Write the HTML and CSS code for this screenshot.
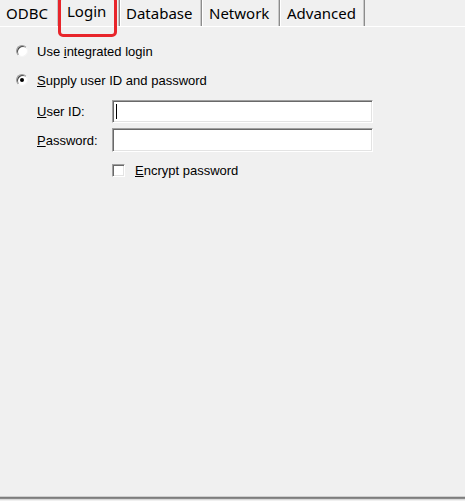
FILE: index.html
```html
<!DOCTYPE html>
<html>
<head>
<meta charset="utf-8">
<link rel="stylesheet" href="styles.css">
</head>
<body>
<div class="tabs">
  <div class="tab tab-odbc">ODBC</div>
  <div class="tab tab-login selected">Login</div>
  <div class="tab tab-db">Database</div>
  <div class="tab tab-net">Network</div>
  <div class="tab tab-adv">Advanced</div>
  <div class="highlight-box"></div>
</div>
<div class="panel">
  <div class="row radio-row first">
    <span class="radio"></span>
    <span class="label">Use <u>i</u>ntegrated login</span>
  </div>
  <div class="row radio-row second">
    <span class="radio checked"></span>
    <span class="label"><u>S</u>upply user ID and password</span>
  </div>
  <div class="fields">
    <span class="field-label"><u>U</u>ser ID:</span>
    <div class="input"><span class="caret"></span></div>
    <span class="field-label"><u>P</u>assword:</span>
    <div class="input"></div>
  </div>
  <div class="row check-row">
    <span class="checkbox"></span>
    <span class="label"><u>E</u>ncrypt password</span>
  </div>
</div>
<div class="bottom-rule">
  <div class="r1"></div><div class="r2"></div><div class="r3"></div><div class="r4"></div>
</div>
</body>
</html>
```
FILE: styles.css
```css
html, body {
  margin: 0;
  padding: 0;
  height: 100%;
}
body {
  background: #f0f0f0;
  display: flex;
  flex-direction: column;
  font-family: "Liberation Sans", Arial, sans-serif;
  color: #000;
  overflow: hidden;
}
.tabs {
  position: relative;
  display: flex;
  height: 26px;
  border-bottom: 1px solid #ffffff;
  font-family: "Noto Sans", "Open Sans", sans-serif;
  font-size: 15px;
}
.tab {
  box-sizing: border-box;
  height: 26px;
  line-height: 26px;
  padding-left: 6px;
  border-right: 1px solid #8c8c8c;
  box-shadow: inset -1px 0 0 #c8c8c8;
  border-left: 1px solid #ffffff;
  white-space: nowrap;
}
.tab-odbc { width: 59px; border-left: none; padding-left: 6px; }
.tab-login { width: 61px; padding-left: 7px; line-height: 22px; }
.tab-db { width: 82px; padding-left: 5px; }
.tab-net { width: 78px; padding-left: 6px; }
.tab-adv { width: 85px; padding-left: 6px; }
.highlight-box {
  position: absolute;
  left: 58px;
  top: -4px;
  width: 53px;
  height: 35px;
  border: 3px solid #e8252b;
  border-radius: 5px;
}
.panel {
  flex: 1;
  font-size: 13px;
  padding-top: 16px;
}
.row {
  display: flex;
  align-items: center;
  height: 16px;
}
.radio-row {
  padding-left: 16px;
}
.radio-row.second {
  margin-top: 13px;
}
.radio {
  box-sizing: border-box;
  width: 12px;
  height: 12px;
  border-radius: 50%;
  background: #fff;
  border: 1px solid;
  border-color: #9a9a9a #f4f4f4 #f4f4f4 #9a9a9a;
  box-shadow: inset 1px 1px 0 #4a4a4a;
  margin-right: 9px;
  position: relative;
}
.radio.checked::after {
  content: "";
  position: absolute;
  left: 3px;
  top: 3px;
  width: 4px;
  height: 4px;
  border-radius: 50%;
  background: #000;
}
.label {
  white-space: nowrap;
}
.fields {
  display: grid;
  grid-template-columns: 75px 261px;
  row-gap: 5px;
  align-items: center;
  margin-top: 12px;
  padding-left: 37px;
}
.input {
  box-sizing: border-box;
  height: 23px;
  background: #fff;
  border: 1px solid;
  border-color: #a0a0a0 #ffffff #ffffff #a0a0a0;
  box-shadow: inset 1px 1px 0 #696969, inset -1px -1px 0 #e3e3e3;
  position: relative;
}
.fields .input + .field-label + .input {
  height: 24px;
}
.caret {
  position: absolute;
  left: 3px;
  top: 3px;
  width: 1px;
  height: 15px;
  background: #000;
}
.check-row {
  margin-top: 10px;
  padding-left: 112px;
  height: 17px;
}
.checkbox {
  box-sizing: border-box;
  width: 13px;
  height: 13px;
  background: #fff;
  border: 1px solid;
  border-color: #a0a0a0 #ffffff #ffffff #a0a0a0;
  box-shadow: inset 1px 1px 0 #696969, inset -1px -1px 0 #e3e3e3;
  margin-right: 10px;
}
.bottom-rule {
  height: 5px;
  display: flex;
  flex-direction: column;
}
.bottom-rule div {
  height: 1px;
}
.bottom-rule .r1 { background: #cfcfcf; }
.bottom-rule .r2 { background: #7d7d7d; }
.bottom-rule .r3 { background: #8a8a8a; }
.bottom-rule .r4 { background: #dadada; }
```
